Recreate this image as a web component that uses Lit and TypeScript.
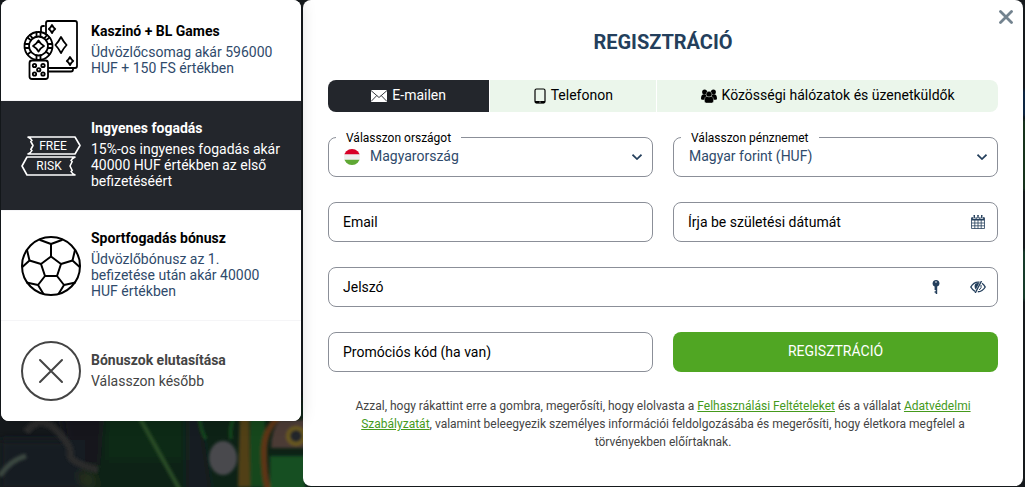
import { LitElement, html, css, svg } from "lit";
import { customElement, property, state } from "lit/decorators.js";
import { classMap } from "lit/directives/class-map.js";

const cardsIcon = html`<svg class="icon" viewBox="0 0 60 60" aria-hidden="true">
  <g fill="none" stroke="currentColor" stroke-width="1.8" stroke-linejoin="round" stroke-linecap="round">
    <path d="M20 12V8q0-2 2-2h1" />
    <path d="M26 51.500h24q2 0 2-2v-1" />
    <path d="M25 13V3q0-2 2-2h27q2 0 2 2v43q0 2-2 2H27" />
    <path d="M31 5q1.300 2.600 3.200 4-1.900 1.400-3.200 4-1.300-2.600-3.200-4 1.900-1.400 3.200-4z" />
    <path d="M40 17q2.400 4.600 5.600 8-3.200 3.400-5.600 8-2.400-4.600-5.600-8 3.200-3.400 5.600-8z" />
    <path d="M49 37q1.300 2.600 3.200 4-1.900 1.400-3.200 4-1.300-2.600-3.200-4 1.900-1.400 3.200-4z" />
    <circle cx="17.500" cy="26" r="14" fill="#fff" />
    <circle cx="17.500" cy="26" r="9.500" />
    <path d="M17.500 20.500q2 3.600 5.500 5.500-3.500 1.900-5.500 5.500-2-3.600-5.500-5.500 3.500-1.900 5.500-5.500z" />
    <path d="M15.500 12.200v4.500M19.500 12.200v4.500M3.700 24h4.500M3.700 28h4.500M31.300 24h-4.500M31.300 28h-4.500M6.500 17.500l3.400 2.700M8.900 15l2.800 3.400M28.500 17.500l-3.400 2.700M26.100 15l-2.800 3.400M6.500 34.500l3.400-2.700M28.500 34.500l-3.400-2.700M15.500 39.800v-4.500M19.500 39.800v-4.500" />
    <rect x="8.500" y="40.500" width="18.500" height="18.500" rx="2.500" fill="#fff" />
    <circle cx="13.500" cy="45.500" r="1.700" /><circle cx="22" cy="45.500" r="1.700" />
    <circle cx="17.750" cy="49.750" r="1.700" />
    <circle cx="13.500" cy="54" r="1.700" /><circle cx="22" cy="54" r="1.700" />
  </g>
</svg>`;

const freeRiskIcon = html`<svg class="icon" viewBox="0 0 60 60" aria-hidden="true">
  <g fill="none" stroke="currentColor" stroke-width="1.600" stroke-linejoin="round">
    <path d="M7 11h47l5 8.500-5 8.500H7q3-1.500 4-3.500l-1.200-1 2.200-4-2.200-4 1.200-1q-1-2-4-3.500z" />
    <path d="M54 31H6l-5 9 5 9h48q-3-1.500-4-3.500l1.200-1-2.200-4.500 2.200-4.500-1.200-1q1-2 4-3.500z" />
  </g>
  <g fill="currentColor" font-size="12" text-anchor="middle">
    <text x="32" y="24">FREE</text>
    <text x="28" y="44">RISK</text>
  </g>
</svg>`;

const ballIcon = html`<svg class="icon" viewBox="0 0 60 60" aria-hidden="true">
  <g fill="none" stroke="currentColor" stroke-width="2" stroke-linejoin="round">
    <circle cx="30" cy="30" r="29" />
    <path d="M30 20.500l10 7.500-4 12H24l-4-12z" />
    <path d="M30 20.500V8M20 28L8.500 24.500M40 28l11.500-3.500M24 40l-7 9M36 40l7 9" />
    <path d="M18.500 3.700L30 8l11.500-4.300" />
    <path d="M6 14l2.500 10.500L1.300 31M54 14l-2.500 10.500 7.200 6.500" />
    <path d="M5.500 46.500L17 49l5.500 9M54.500 46.500L43 49l-5.500 9" />
  </g>
</svg>`;

const declineIcon = html`<svg class="icon" viewBox="0 0 60 60" aria-hidden="true">
  <g fill="none" stroke="currentColor" stroke-width="2" stroke-linecap="round">
    <circle cx="30" cy="30" r="29" />
    <path d="M19 19l22 22M41 19L19 41" />
  </g>
</svg>`;

const mailIcon = html`<svg width="16" height="12" viewBox="0 0 16 12" aria-hidden="true">
  <rect width="16" height="12" fill="#fff" />
  <path d="M0 0.500l8 7 8-7M0 11.500l5.800-6M16 11.500l-5.800-6" fill="none" stroke="#23262c" stroke-width="0.900" />
</svg>`;

const phoneIcon = html`<svg width="12" height="16" viewBox="0 0 12 16" aria-hidden="true">
  <rect x="1" y="1" width="10" height="14" rx="1.500" fill="none" stroke="currentColor" stroke-width="1.200" />
  <path d="M1 13h10v1.500l-1 .8H2l-1-.8z" fill="currentColor" />
  <circle cx="6" cy="14" r=".6" fill="#fff" />
</svg>`;

const peopleIcon = html`<svg width="16" height="14" viewBox="0 0 16 14" aria-hidden="true">
  <g fill="currentColor">
    <circle cx="3.600" cy="3" r="2.500" /><circle cx="12.400" cy="3" r="2.500" />
    <path d="M0 9.500q0-4.300 3.200-4.300 1.600 0 2.400 1.300L4.200 10.800H1.200Q0 10.800 0 9.500zM16 9.500q0-4.300-3.200-4.300-1.600 0-2.400 1.300l1.400 4.300h3q1.200 0 1.200-1.300z" />
    <g stroke="#ebf6eb" stroke-width=".4">
      <circle cx="8" cy="5.200" r="2.900" />
      <path d="M3.400 12q0-4.500 2.600-4.700 2 1.400 4 0 2.600.2 2.600 4.700 0 2-2 2H5.400q-2 0-2-2z" />
    </g>
  </g>
</svg>`;

const flagIcon = html`<svg width="16" height="16" viewBox="0 0 16 16" aria-hidden="true">
  <clipPath id="disc"><circle cx="8" cy="8" r="8" /></clipPath>
  <g clip-path="url(#disc)">
    <path fill="#eee" d="M0 0h16v16H0z" />
    <path fill="#d80027" d="M0 0h16v5.200H0z" />
    <path fill="#5fa834" d="M0 10.800h16V16H0z" />
  </g>
</svg>`;

const chevronIcon = html`<svg width="10" height="6" viewBox="0 0 10 6" aria-hidden="true">
  <path d="M0.500 0.700L5 5l4.500-4.300" fill="none" stroke="currentColor" stroke-width="1.700" />
</svg>`;

const calendarIcon = html`<svg width="14" height="14" viewBox="0 0 14 14" aria-hidden="true">
  <path fill="currentColor" d="M0.500 2H13.500v3.500H.5z" />
  <path fill="currentColor" d="M2.500 0H4v3H2.500zM6.200 0h1.600v3H6.200zM10 0h1.500v3H10z" />
  <path fill="none" stroke="#fff" stroke-width=".7" d="M2.200 1.500v2h2.200v-2M5.900 1.500v2h2.200v-2M9.600 1.500v2h2.200v-2" />
  <path fill="none" stroke="currentColor" stroke-width=".8" d="M.5 3v10.500h13V3M3.800 5v8.500M7 5v8.500M10.200 5v8.500M.5 8h13M.5 10.800h13" />
</svg>`;

const keyIcon = html`<svg width="8" height="14" viewBox="0 0 8 14" aria-hidden="true">
  <path fill="currentColor" fill-rule="evenodd" d="M4 0a3.400 3.400 0 0 1 1.200 6.600V14H3.700v-1.200H2.600v-1.500h1.100V10H2.600V6.500A3.400 3.400 0 0 1 4 0zm0 1.200a.8.8 0 1 0 0 1.600.8.8 0 0 0 0-1.600z" />
</svg>`;

const eyeIcon = html`<svg width="16" height="12" viewBox="0 0 16 12" aria-hidden="true">
  <g fill="none" stroke="currentColor">
    <path stroke-width="1.400" d="M9.500 1.200Q4 .4 .8 6q1.700 3 4.200 4.300M12 2.200q2 1.400 3.200 3.800Q12.500 10.700 7.800 10.800" />
    <path stroke-width="1.400" d="M11.500 0L5.200 12" />
    <path stroke-width="1" d="M11 4q1 2.900-1.800 5" />
  </g>
  <path fill="currentColor" d="M9.200 2.200L5.800 8.500Q3.600 5.800 5.200 3q1.800-1.600 4-.8z" />
</svg>`;

const closeIcon = html`<svg width="14" height="14" viewBox="0 0 14 14" aria-hidden="true">
  <path d="M1.500 1.500l11 11M12.500 1.500l-11 11" stroke="currentColor" stroke-width="2.800" stroke-linecap="round" />
</svg>`;

interface Bonus {
  title: string;
  text: string;
  icon: unknown;
}

const bonuses: Bonus[] = [
  { title: "Kaszinó + BL Games", text: "Üdvözlőcsomag akár 596000 HUF + 150 FS értékben", icon: cardsIcon },
  { title: "Ingyenes fogadás", text: "15%-os ingyenes fogadás akár 40000 HUF értékben az első befizetéséért", icon: freeRiskIcon },
  { title: "Sportfogadás bónusz", text: "Üdvözlőbónusz az 1. befizetése után akár 40000 HUF értékben", icon: ballIcon },
  { title: "Bónuszok elutasítása", text: "Válasszon később", icon: declineIcon },
];

@customElement("page-backdrop")
export class PageBackdrop extends LitElement {
  static styles = css`
    :host {
      display: block;
      background: #15191c;
    }
    .art {
      display: block;
      width: 100%;
      height: 100%;
    }
  `;

  render() {
    return html`<svg class="art" viewBox="0 0 1025 487" preserveAspectRatio="xMinYMax slice" aria-hidden="true">
      <defs>
        <filter id="soft" x="-10%" y="-10%" width="120%" height="120%"><feGaussianBlur stdDeviation="5" /></filter>
        <filter id="edge" x="-10%" y="-10%" width="120%" height="120%"><feGaussianBlur stdDeviation="1.500" /></filter>
      </defs>
      ${svg`
        <g filter="url(#soft)">
          <path fill="#0d2114" d="M85 400h225v110H85z" />
          <path fill="#102b17" d="M105 400h80v60h-80z" />
          <path fill="#15191f" d="M60 410h45l-5 55H70z" />
          <path fill="#171a20" d="M0 440h85v50H0z" />
          <path fill="#191b20" d="M186 400h12l15 100h-27z" />
          <path fill="#26331a" d="M78 472h14l6 15H82z" />
        </g>
        <g filter="url(#edge)">
          <path fill="none" stroke="#2c2c2c" stroke-width="7" d="M26 432q14-18 30-2t14 24 28 16" />
          <path fill="none" stroke="#3b4640" stroke-width="5" d="M0 476q10-16 26-20" />
          <path fill="none" stroke="#2c4d27" stroke-width="4" d="M138 415l42 75" />
          <ellipse cx="223" cy="458" rx="14" ry="17" fill="#48484d" />
          <path fill="none" stroke="#174d1f" stroke-width="3" d="M199 415q2 18 7 24M235 415q-6 12-4 24" />
          <path fill="#514016" d="M240 415h9l1 72h-12z" />
          <path fill="#14461c" d="M250 415h15v72h-15z" />
          <path fill="none" stroke="#5d3518" stroke-width="6" d="M278 418q-14 12-14 34t4 38" />
          <path fill="#4b3a34" d="M280 420h25v28h-34q0-18 9-28z" />
          <path fill="#155021" d="M270 456h35v34h-35z" />
          <circle cx="296" cy="436" r="8" fill="#21262a" stroke="#6b5a1d" stroke-width="4" />
        </g>
        <g filter="url(#edge)">
          <path fill="#12301b" d="M1018 120h10v70h-10z" />
          <path fill="#102542" d="M1018 90h10v26h-10z" />
          <path fill="#143b2a" d="M1018 250h10v50h-10z" />
        </g>`}
    </svg>`;
  }
}

@customElement("bonus-list")
export class BonusList extends LitElement {
  @property({ type: Number }) selected = 1;

  static styles = css`
    :host {
      display: block;
      position: relative;
      z-index: 1;
      border-radius: 8px;
      overflow: hidden;
      background: #fff;
      box-shadow: 0 0 16px rgba(0, 0, 0, 0.15);
    }
    .bonus {
      display: grid;
      grid-template-columns: 60px 1fr;
      gap: 10px;
      align-items: center;
      width: 100%;
      box-sizing: border-box;
      padding: 20px;
      border: 0;
      border-bottom: 1px solid #f5f5f7;
      background: #fff;
      color: #000;
      font: 400 14px/16px Roboto, sans-serif;
      text-align: left;
      cursor: pointer;
    }
    .bonus:last-child {
      border-bottom: 0;
      color: #444;
    }
    .bonus.active,
    .bonus.active .text {
      background: #23262c;
      color: #fff;
    }
    .icon {
      display: block;
      width: 60px;
      height: 60px;
    }
    .copy {
      display: grid;
      gap: 5px;
      margin: -1px 0 1px;
    }
    .title {
      font-weight: 700;
    }
    .text {
      color: #2f4a6b;
    }
    .bonus:last-child .text {
      color: #444;
    }
  `;

  private pick(index: number) {
    this.selected = index;
  }

  render() {
    return bonuses.map(
      (bonus, index) => html`<button
        type="button"
        class=${classMap({ bonus: true, active: index === this.selected })}
        aria-pressed=${index === this.selected ? "true" : "false"}
        @click=${() => this.pick(index)}
      >
        ${bonus.icon}
        <span class="copy">
          <span class="title">${bonus.title}</span>
          <span class="text">${bonus.text}</span>
        </span>
      </button>`
    );
  }
}

@customElement("registration-form")
export class RegistrationForm extends LitElement {
  @state() private tab = 0;
  @state() private showPassword = false;

  static styles = css`
    :host {
      display: block;
      position: relative;
      box-sizing: border-box;
      padding: 30px 25px 35px;
      border-radius: 8px;
      background: #fff;
      color: #000;
      font: 400 14px/16px Roboto, sans-serif;
    }
    svg {
      display: block;
      flex: none;
    }
    button {
      font: inherit;
      border: 0;
      cursor: pointer;
    }
    .close {
      position: absolute;
      top: 8px;
      right: 8px;
      padding: 2px;
      background: none;
      color: #73838f;
    }
    .heading {
      margin: 0 0 26px;
      color: #243f5c;
      font-size: 20px;
      line-height: 24px;
      font-weight: 700;
      text-align: center;
    }
    .tabs {
      display: flex;
      gap: 1px;
      margin-bottom: 25px;
      border-radius: 8px;
      overflow: hidden;
    }
    .tab {
      display: flex;
      flex: 1 1 auto;
      align-items: center;
      justify-content: center;
      gap: 5px;
      height: 32px;
      padding: 0;
      background: #ebf6eb;
      color: #000;
    }
    .tab.active {
      background: #23262c;
      color: #fff;
    }
    .tab-label {
      padding-bottom: 2px;
    }
    .fields {
      display: grid;
      grid-template-columns: 1fr 1fr;
      gap: 25px 20px;
    }
    .wide {
      grid-column: 1 / -1;
    }
    .field {
      display: flex;
      position: relative;
      align-items: center;
      box-sizing: border-box;
      height: 40px;
      border: 1px solid #8b8f98;
      border-radius: 8px;
      background: #fff;
      color: #243f5c;
    }
    .caption {
      position: absolute;
      top: -8px;
      left: 7px;
      padding: 0 10px;
      background: #fff;
      color: #000;
      font-size: 12px;
      line-height: 16px;
    }
    .flag {
      position: absolute;
      left: 15px;
      pointer-events: none;
    }
    .arrow {
      position: absolute;
      right: 10px;
      pointer-events: none;
    }
    .select,
    .input {
      flex: 1;
      min-width: 0;
      height: 38px;
      box-sizing: border-box;
      margin: 0;
      padding: 0 14px;
      border: 0;
      border-radius: 8px;
      background: none;
      color: #000;
      font: inherit;
    }
    .select {
      appearance: none;
      padding: 0 30px 2px 15px;
      color: #2f4a6b;
    }
    .select.flagged {
      padding-left: 41px;
    }
    .input::placeholder {
      color: #000;
      opacity: 1;
    }
    .tool {
      display: grid;
      place-items: center;
      width: 38px;
      height: 38px;
      padding: 0;
      background: none;
      color: #243f5c;
    }
    .tools {
      display: flex;
      gap: 4px;
    }
    .submit {
      height: 40px;
      padding: 0 0 2px;
      border-radius: 8px;
      background: #50a623;
      color: #fff;
    }
    .terms {
      margin: 25px 25px 0;
      color: #444;
      font-size: 12px;
      line-height: 18px;
      text-align: center;
    }
    .terms a {
      color: #459a1c;
    }
  `;

  render() {
    const tabs = [
      { label: "E-mailen", icon: mailIcon },
      { label: "Telefonon", icon: phoneIcon },
      { label: "Közösségi hálózatok és üzenetküldők", icon: peopleIcon },
    ];
    return html`
      <button class="close" type="button" aria-label="Bezárás">${closeIcon}</button>
      <h1 class="heading">REGISZTRÁCIÓ</h1>
      <div class="tabs" role="tablist">
        ${tabs.map(
          (tab, index) => html`<button
            type="button"
            role="tab"
            class=${classMap({ tab: true, active: index === this.tab })}
            aria-selected=${index === this.tab ? "true" : "false"}
            @click=${() => (this.tab = index)}
          >
            ${tab.icon}<span class="tab-label">${tab.label}</span>
          </button>`
        )}
      </div>
      <form @submit=${(event: Event) => event.preventDefault()}>
        <div class="fields">
          <div class="field">
            <label class="caption" for="country">Válasszon országot</label>
            <span class="flag">${flagIcon}</span>
            <select class="select flagged" id="country"><option>Magyarország</option></select>
            <span class="arrow">${chevronIcon}</span>
          </div>
          <div class="field">
            <label class="caption" for="currency">Válasszon pénznemet</label>
            <select class="select" id="currency"><option>Magyar forint (HUF)</option></select>
            <span class="arrow">${chevronIcon}</span>
          </div>
          <div class="field">
            <input class="input" type="email" aria-label="Email" placeholder="Email" />
          </div>
          <div class="field">
            <input class="input" type="text" aria-label="Írja be születési dátumát" placeholder="Írja be születési dátumát" />
            <button class="tool" type="button" aria-label="Naptár">${calendarIcon}</button>
          </div>
          <div class="field wide">
            <input class="input" type=${this.showPassword ? "text" : "password"} aria-label="Jelszó" placeholder="Jelszó" />
            <div class="tools">
              <button class="tool" type="button" aria-label="Jelszó generálása">${keyIcon}</button>
              <button
                class="tool"
                type="button"
                aria-label="Jelszó megjelenítése"
                @click=${() => (this.showPassword = !this.showPassword)}
              >${eyeIcon}</button>
            </div>
          </div>
          <div class="field">
            <input class="input" type="text" aria-label="Promóciós kód (ha van)" placeholder="Promóciós kód (ha van)" />
          </div>
          <button class="submit" type="submit">REGISZTRÁCIÓ</button>
        </div>
      </form>
      <p class="terms">
        Azzal, hogy rákattint erre a gombra, megerősíti, hogy elolvasta a
        <a href="#terms">Felhasználási Feltételeket</a> és a vállalat
        <a href="#privacy">Adatvédelmi Szabályzatát</a>, valamint beleegyezik személyes információi feldolgozásába és
        megerősíti, hogy életkora megfelel a törvényekben előírtaknak.
      </p>
    `;
  }
}

@customElement("app-root")
export class AppRoot extends LitElement {
  static styles = css`
    :host {
      display: block;
      position: relative;
      min-height: 100vh;
    }
    .backdrop {
      position: absolute;
      inset: 0;
      overflow: hidden;
    }
    .dialog {
      display: grid;
      position: relative;
      grid-template-columns: 300px 1fr;
      gap: 2px;
      align-items: start;
      padding: 0 2px 0 1px;
    }
  `;

  render() {
    return html`
      <page-backdrop class="backdrop"></page-backdrop>
      <main class="dialog">
        <bonus-list></bonus-list>
        <registration-form></registration-form>
      </main>
    `;
  }
}
